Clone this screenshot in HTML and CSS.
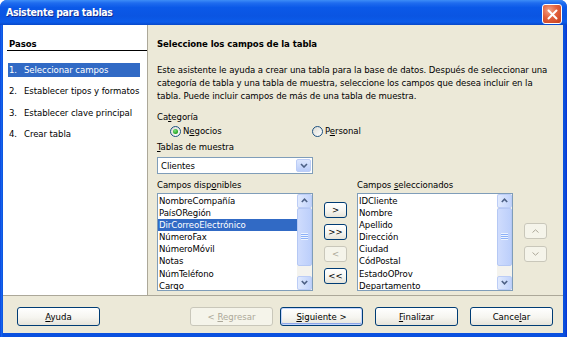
FILE: index.html
```html
<!DOCTYPE html>
<html lang="es">
<head>
<meta charset="utf-8">
<title>Asistente para tablas</title>
<link rel="stylesheet" href="styles.css">
</head>
<body>
<div class="window">
  <div class="titlebar">
    <div class="title">Asistente para tablas</div>
    <div class="close">
      <svg width="11" height="11" viewBox="0 0 11 11"><path d="M1.5 1.5 L9.5 9.5 M9.5 1.5 L1.5 9.5" stroke="#fff" stroke-width="2" stroke-linecap="round"/></svg>
    </div>
  </div>
  <div class="client">
    <div class="main">
      <div class="steps">
        <div class="steps-title">Pasos</div>
        <ol class="step-list">
          <li class="step active"><span class="num">1.</span>Seleccionar campos</li>
          <li class="step"><span class="num">2.</span>Establecer tipos y formatos</li>
          <li class="step"><span class="num">3.</span>Establecer clave principal</li>
          <li class="step"><span class="num">4.</span>Crear tabla</li>
        </ol>
      </div>
      <div class="content">
        <h1 class="heading">Seleccione los campos de la tabla</h1>
        <p class="intro">Este asistente le ayuda a crear una tabla para la base de datos. Después de seleccionar una<br>categoría de tabla y una tabla de muestra, seleccione los campos que desea incluir en la<br>tabla. Puede incluir campos de más de una tabla de muestra.</p>
        <div class="label cat-label">Ca<u>t</u>egoría</div>
        <div class="radio-row">
          <div class="radio-opt first"><span class="radio checked"><span class="dot"></span></span><span>N<u>e</u>gocios</span></div>
          <div class="radio-opt"><span class="radio"></span><span>P<u>e</u>rsonal</span></div>
        </div>
        <div class="label tab-label"><u>T</u>ablas de muestra</div>
        <div class="combo">
          <div class="combo-text">Clientes</div>
          <div class="combo-btn">
            <svg width="8" height="5" viewBox="0 0 8 5"><path d="M1 1 L4 4 L7 1" fill="none" stroke="#4D6185" stroke-width="1.6"/></svg>
          </div>
        </div>
        <div class="fields-labels">
          <div class="label fl-left">Campos disp<u>o</u>nibles</div>
          <div class="label">Campos <u>s</u>eleccionados</div>
        </div>
        <div class="fields-row">
          <div class="listbox">
            <ul class="items">
              <li class="item">NombreCompañía</li>
              <li class="item">PaísORegión</li>
              <li class="item sel">DirCorreoElectrónico</li>
              <li class="item">NúmeroFax</li>
              <li class="item">NúmeroMóvil</li>
              <li class="item">Notas</li>
              <li class="item">NúmTeléfono</li>
              <li class="item">Cargo</li>
            </ul>
            <div class="scrollbar">
              <div class="sb-btn"><svg width="7" height="5" viewBox="0 0 7 5"><path d="M0.8 4 L3.5 1.2 L6.2 4" fill="none" stroke="#4D6185" stroke-width="1.6"/></svg></div>
              <div class="sb-thumb"><span class="grip"></span></div>
              <div class="sb-track"></div>
              <div class="sb-btn"><svg width="7" height="5" viewBox="0 0 7 5"><path d="M0.8 1 L3.5 3.8 L6.2 1" fill="none" stroke="#4D6185" stroke-width="1.6"/></svg></div>
            </div>
          </div>
          <div class="move-col">
            <button class="btn small"><span>&gt;</span></button>
            <button class="btn small"><span>&gt;&gt;</span></button>
            <button class="btn small" disabled><span>&lt;</span></button>
            <button class="btn small"><span>&lt;&lt;</span></button>
          </div>
          <div class="listbox">
            <ul class="items">
              <li class="item">IDCliente</li>
              <li class="item">Nombre</li>
              <li class="item">Apellido</li>
              <li class="item">Dirección</li>
              <li class="item">Ciudad</li>
              <li class="item">CódPostal</li>
              <li class="item">EstadoOProv</li>
              <li class="item">Departamento</li>
            </ul>
            <div class="scrollbar">
              <div class="sb-btn"><svg width="7" height="5" viewBox="0 0 7 5"><path d="M0.8 4 L3.5 1.2 L6.2 4" fill="none" stroke="#4D6185" stroke-width="1.6"/></svg></div>
              <div class="sb-thumb"><span class="grip"></span></div>
              <div class="sb-track"></div>
              <div class="sb-btn"><svg width="7" height="5" viewBox="0 0 7 5"><path d="M0.8 1 L3.5 3.8 L6.2 1" fill="none" stroke="#4D6185" stroke-width="1.6"/></svg></div>
            </div>
          </div>
          <div class="order-col">
            <button class="btn small" disabled><svg width="7" height="4" viewBox="0 0 7 4"><path d="M0.5 3.5 L3.5 0.8 L6.5 3.5" fill="none" stroke="#ACA899" stroke-width="1"/></svg></button>
            <button class="btn small" disabled><svg width="7" height="4" viewBox="0 0 7 4"><path d="M0.5 0.5 L3.5 3.2 L6.5 0.5" fill="none" stroke="#ACA899" stroke-width="1"/></svg></button>
          </div>
        </div>
      </div>
    </div>
    <div class="footer">
      <button class="btn"><span><u>A</u>yuda</span></button>
      <button class="btn push" disabled><span>&lt; <u>R</u>egresar</span></button>
      <button class="btn default next"><span><u>S</u>iguiente &gt;</span></button>
      <button class="btn gap"><span><u>F</u>inalizar</span></button>
      <button class="btn gap"><span>Cance<u>l</u>ar</span></button>
    </div>
  </div>
</div>
</body>
</html>
```
FILE: styles.css
```css
* { box-sizing: border-box; }
html, body { margin: 0; padding: 0; }
body {
  width: 567px;
  height: 337px;
  overflow: hidden;
  background: #fff;
  font-family: "DejaVu Sans Condensed", "DejaVu Sans", "Liberation Sans", sans-serif;
  font-size: 9.5px;
  letter-spacing: -0.07px;
  color: #000;
}
u { text-decoration: underline; text-underline-offset: 1px; }

.window {
  width: 567px;
  height: 337px;
  display: flex;
  flex-direction: column;
  background: linear-gradient(to right, #0831D9 0, #166AEE 1px, #0A50DF 3px, #0A50DF 563px, #0B4FD8 565px, #0831D9 567px);
  border-radius: 7px 7px 0 0;
}
.titlebar {
  height: 25px;
  display: flex;
  align-items: flex-start;
  padding: 0 5px 0 6px;
  background: linear-gradient(#3D8DF7 0%, #1F6CEF 12%, #0B59E8 30%, #0A55E2 65%, #0C5CEA 88%, #0848C9 100%);
  border-radius: 7px 7px 0 0;
}
.title {
  flex: 1;
  color: #fff;
  font-weight: bold;
  font-size: 10.5px;
  letter-spacing: -0.35px;
  line-height: 25px;
  text-shadow: 1px 1px 0 #0F2B8F;
}
.close {
  margin-top: 4px;
  width: 20px;
  height: 20px;
  border: 1px solid #fff;
  border-radius: 3px;
  background: radial-gradient(circle at 35% 30%, #F3A286 0%, #E2603C 45%, #C33E1C 100%);
  display: flex;
  align-items: center;
  justify-content: center;
}

.client {
  flex: 1;
  margin: 0 4px 4px 3px;
  background: #ECE9D8;
  display: flex;
  flex-direction: column;
}
.main {
  height: 271px;
  display: flex;
  border-bottom: 1px solid #ACA899;
}
.steps {
  width: 145px;
  background: #fff;
  border-right: 1px solid #ACA899;
  padding-top: 12px;
}
.steps-title {
  margin-left: 4px;
  padding-left: 2px;
  font-weight: bold;
  line-height: 13px;
  border-bottom: 1px solid #000;
}
.step-list {
  list-style: none;
  margin: 12px 0 0 0;
  padding: 0;
}
.step {
  margin-left: 5px;
  width: 132px;
  height: 14px;
  line-height: 14px;
  padding-left: 1px;
  margin-bottom: 7.3px;
  white-space: nowrap;
}
.step .num { display: inline-block; width: 15px; }
.step.active { background: #316AC5; color: #fff; }

.content {
  flex: 1;
  padding: 12px 4px 0 9px;
}
.heading {
  margin: 0;
  font-size: 9.5px;
  font-weight: bold;
  line-height: 13px;
}
.intro {
  margin: 13px 0 0 0;
  line-height: 13px;
  white-space: nowrap;
}
.label { line-height: 13px; }
.cat-label { margin-top: 8px; }
.radio-row {
  margin-top: 1px;
  height: 14px;
  display: flex;
  padding-left: 13px;
}
.radio-opt {
  display: flex;
  align-items: center;
  line-height: 14px;
}
.radio-opt.first { width: 142px; }
.radio {
  width: 11px;
  height: 11px;
  border: 1px solid #1C5180;
  border-radius: 50%;
  background: linear-gradient(135deg, #DCDBD3, #FFFFFF);
  margin-right: 2px;
  display: flex;
  align-items: center;
  justify-content: center;
}
.dot {
  width: 5px;
  height: 5px;
  border-radius: 50%;
  background: radial-gradient(circle at 40% 35%, #7BE27B, #21A121 70%);
}
.tab-label { margin-top: 2px; }
.combo {
  margin-top: 3.5px;
  width: 156px;
  height: 17px;
  border: 1px solid #7F9DB9;
  background: #fff;
  display: flex;
  align-items: center;
}
.combo-text { flex: 1; padding-left: 3px; line-height: 15px; }
.combo-btn {
  width: 15px;
  height: 13px;
  margin-right: 1px;
  border: 1px solid #BCCDF6;
  border-radius: 2px;
  background: linear-gradient(#DDE7FE, #BACDFA);
  display: flex;
  align-items: center;
  justify-content: center;
}
.fields-labels {
  margin-top: 4.5px;
  display: flex;
}
.fl-left { width: 200px; }
.fields-row {
  margin-top: 1.5px;
  display: flex;
  align-items: flex-start;
}
.listbox {
  width: 156px;
  height: 98px;
  border: 1px solid #7F9DB9;
  background: #fff;
  display: flex;
}
.items {
  flex: 1;
  list-style: none;
  margin: 0;
  padding: 1px 0 0 0;
  overflow: hidden;
}
.item {
  height: 12.2px;
  line-height: 12.2px;
  padding-left: 1px;
  white-space: nowrap;
}
.item.sel { background: #316AC5; color: #fff; }
.scrollbar {
  width: 15px;
  display: flex;
  flex-direction: column;
  background: #F4F3EE;
}
.sb-btn {
  height: 14px;
  border: 1px solid #BCCDF6;
  border-radius: 2px;
  background: linear-gradient(to right, #E1EAFE, #C1D3FB);
  display: flex;
  align-items: center;
  justify-content: center;
}
.sb-thumb {
  height: 58px;
  border: 1px solid #B5C8F4;
  border-radius: 2px;
  background: linear-gradient(to right, #CFDCFD, #BCCFFB);
  display: flex;
  align-items: center;
  justify-content: center;
}
.grip {
  width: 7px;
  height: 7px;
  background: repeating-linear-gradient(#EEF4FE 0, #EEF4FE 1px, #8CB0F8 1px, #8CB0F8 2px);
}
.sb-track { flex: 1; }

.move-col {
  margin: 0 10px 0 11px;
  width: 23px;
  padding-top: 9px;
  display: flex;
  flex-direction: column;
  gap: 6px;
}
.order-col {
  margin-left: 11px;
  width: 23px;
  padding-top: 30px;
  display: flex;
  flex-direction: column;
  gap: 7px;
}

.btn {
  width: 83px;
  height: 19px;
  padding: 0;
  border: 1px solid #003C74;
  border-radius: 3px;
  background: linear-gradient(#FFFFFF 0%, #F6F5F0 55%, #E6E4DA 100%);
  font: inherit;
  color: #000;
  display: flex;
  align-items: center;
  justify-content: center;
}
.btn.small { width: 23px; height: 16px; }
.btn:disabled {
  border-color: #C9C7BA;
  color: #ACA899;
  background: #F5F4EA;
}
.btn.default {
  box-shadow: inset 0 0 0 1px #C3D5FD, inset 0 -1px 0 1px #8DA6E8;
}

.footer {
  flex: 1;
  display: flex;
  align-items: flex-start;
  padding: 11px 10px 0 14px;
}
.push { margin-left: auto; }
.next { margin-left: 7px; }
.gap { margin-left: 12px; }
```
